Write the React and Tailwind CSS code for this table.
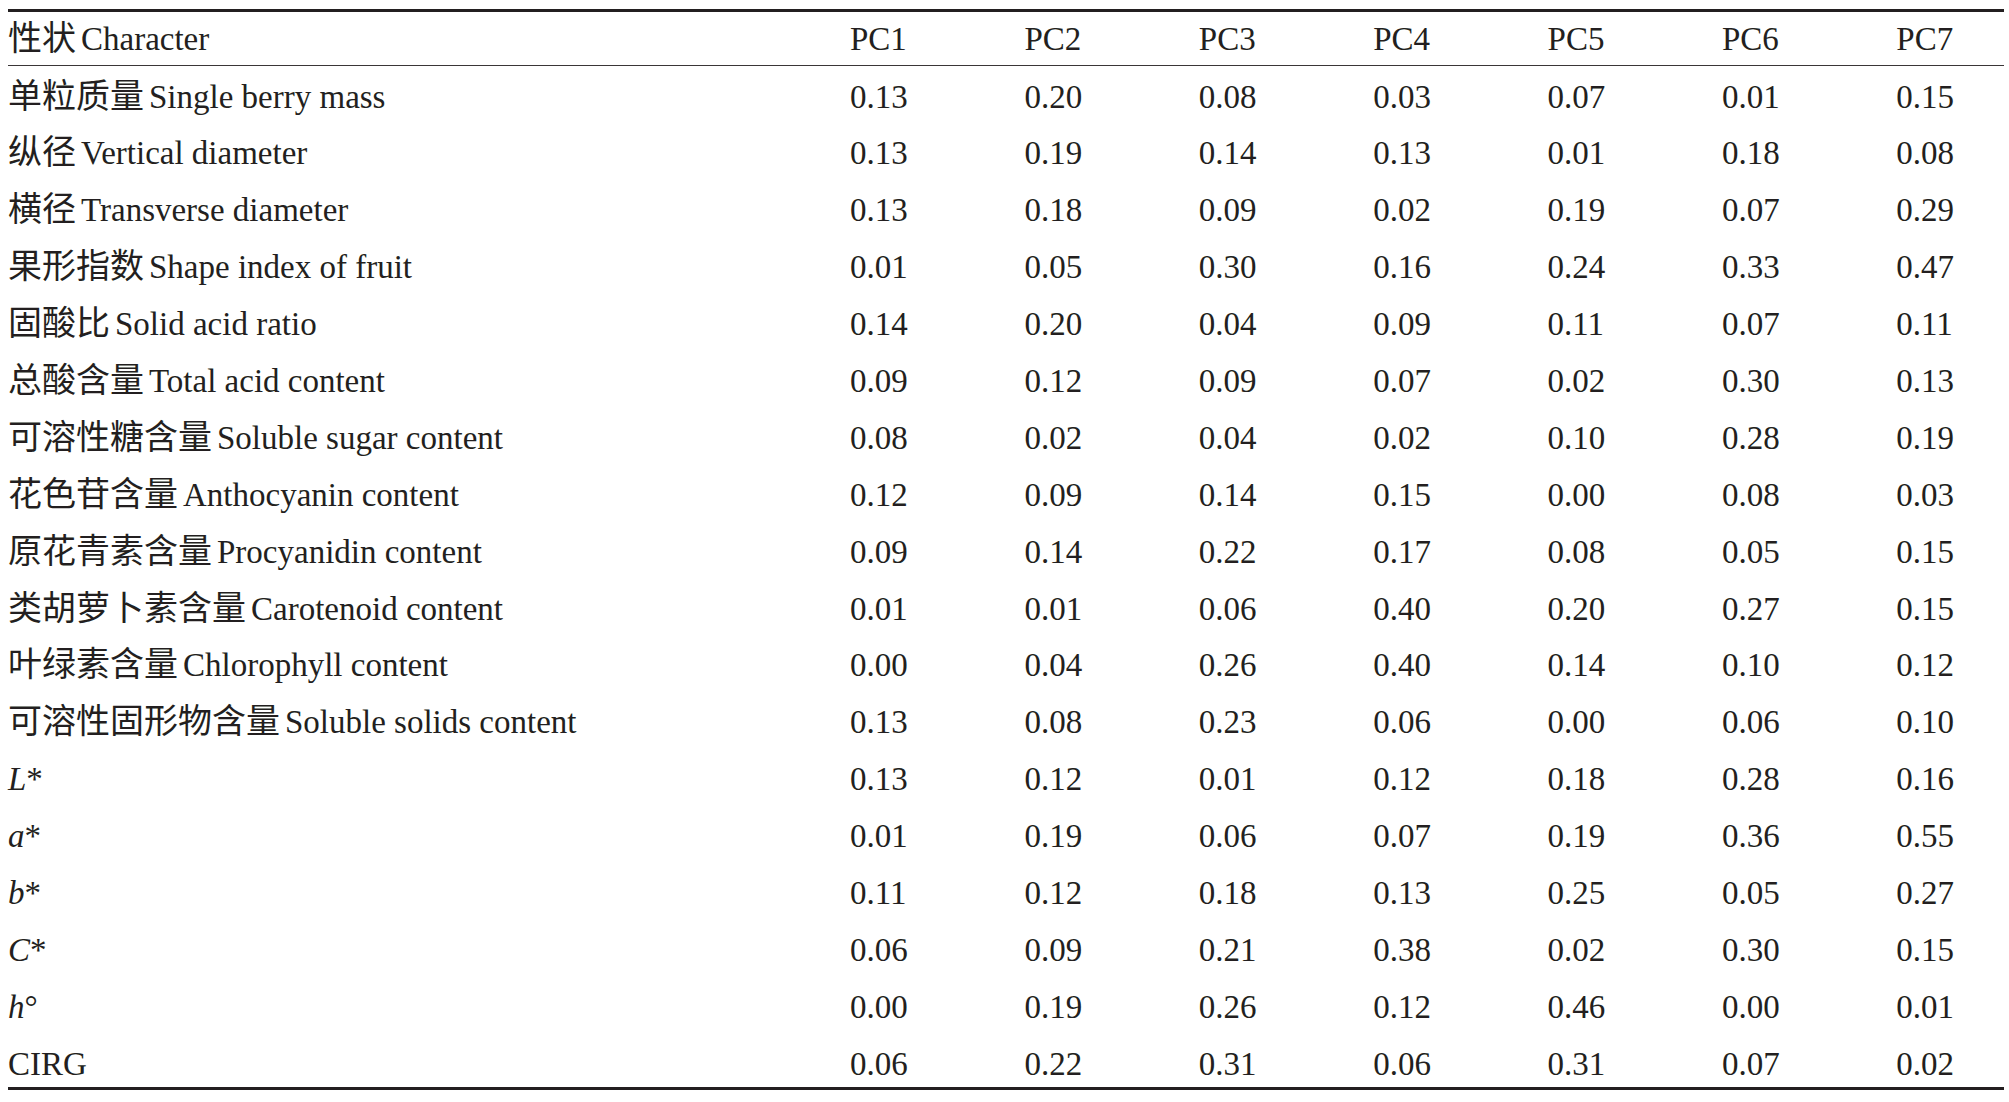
const HEAD = ['PC1', 'PC2', 'PC3', 'PC4', 'PC5', 'PC6', 'PC7']

// Loadings of each trait on the first seven principal components
const ROWS = [
  { zh: '单粒质量', en: 'Single berry mass', v: ['0.13', '0.20', '0.08', '0.03', '0.07', '0.01', '0.15'] },
  { zh: '纵径', en: 'Vertical diameter', v: ['0.13', '0.19', '0.14', '0.13', '0.01', '0.18', '0.08'] },
  { zh: '横径', en: 'Transverse diameter', v: ['0.13', '0.18', '0.09', '0.02', '0.19', '0.07', '0.29'] },
  { zh: '果形指数', en: 'Shape index of fruit', v: ['0.01', '0.05', '0.30', '0.16', '0.24', '0.33', '0.47'] },
  { zh: '固酸比', en: 'Solid acid ratio', v: ['0.14', '0.20', '0.04', '0.09', '0.11', '0.07', '0.11'] },
  { zh: '总酸含量', en: 'Total acid content', v: ['0.09', '0.12', '0.09', '0.07', '0.02', '0.30', '0.13'] },
  { zh: '可溶性糖含量', en: 'Soluble sugar content', v: ['0.08', '0.02', '0.04', '0.02', '0.10', '0.28', '0.19'] },
  { zh: '花色苷含量', en: 'Anthocyanin content', v: ['0.12', '0.09', '0.14', '0.15', '0.00', '0.08', '0.03'] },
  { zh: '原花青素含量', en: 'Procyanidin content', v: ['0.09', '0.14', '0.22', '0.17', '0.08', '0.05', '0.15'] },
  { zh: '类胡萝卜素含量', en: 'Carotenoid content', v: ['0.01', '0.01', '0.06', '0.40', '0.20', '0.27', '0.15'] },
  { zh: '叶绿素含量', en: 'Chlorophyll content', v: ['0.00', '0.04', '0.26', '0.40', '0.14', '0.10', '0.12'] },
  { zh: '可溶性固形物含量', en: 'Soluble solids content', v: ['0.13', '0.08', '0.23', '0.06', '0.00', '0.06', '0.10'] },
  { it: 'L', sym: '*', v: ['0.13', '0.12', '0.01', '0.12', '0.18', '0.28', '0.16'] },
  { it: 'a', sym: '*', v: ['0.01', '0.19', '0.06', '0.07', '0.19', '0.36', '0.55'] },
  { it: 'b', sym: '*', v: ['0.11', '0.12', '0.18', '0.13', '0.25', '0.05', '0.27'] },
  { it: 'C', sym: '*', v: ['0.06', '0.09', '0.21', '0.38', '0.02', '0.30', '0.15'] },
  { it: 'h', sym: '°', v: ['0.00', '0.19', '0.26', '0.12', '0.46', '0.00', '0.01'] },
  { en: 'CIRG', v: ['0.06', '0.22', '0.31', '0.06', '0.31', '0.07', '0.02'] },
]

const GRID = 'grid grid-cols-[842px_repeat(6,174.4px)_1fr]'

function Label({ zh, en, it, sym }) {
  if (it) {
    return (
      <span>
        <i>{it}</i>{sym}
      </span>
    )
  }
  return (
    <span>
      {zh && <span className="text-[34px]">{zh}</span>}
      <span className={zh ? 'ml-[5px]' : ''}>{en}</span>
    </span>
  )
}

export default function App() {
  return (
    <div
      className="min-h-[1102px] w-[2009px] bg-white text-[#231f20] text-[33px] antialiased"
      style={{ fontFamily: '"Liberation Serif", "Noto Sans CJK SC", serif' }}
    >
      <div className="ml-[8px] mt-[9px] w-[1996px] border-t-[3px] border-b-[3px] border-[#231f20]">
        <div className={`${GRID} h-[54px] leading-[54px] border-b-[1.5px] border-[#3a3637] whitespace-nowrap`}>
          <div><Label zh="性状" en="Character" /></div>
          {HEAD.map(h => (
            <div key={h}>{h}</div>
          ))}
        </div>

        {ROWS.map((r, i) => (
          <div
            key={i}
            className={`${GRID} ${i === ROWS.length - 1 ? 'h-[54.2px]' : 'h-[56.9px]'} pt-[2.5px] leading-[56.9px] whitespace-nowrap`}
          >
            <div><Label {...r} /></div>
            {r.v.map((n, j) => (
              <div key={j}>{n}</div>
            ))}
          </div>
        ))}
      </div>
    </div>
  )
}
